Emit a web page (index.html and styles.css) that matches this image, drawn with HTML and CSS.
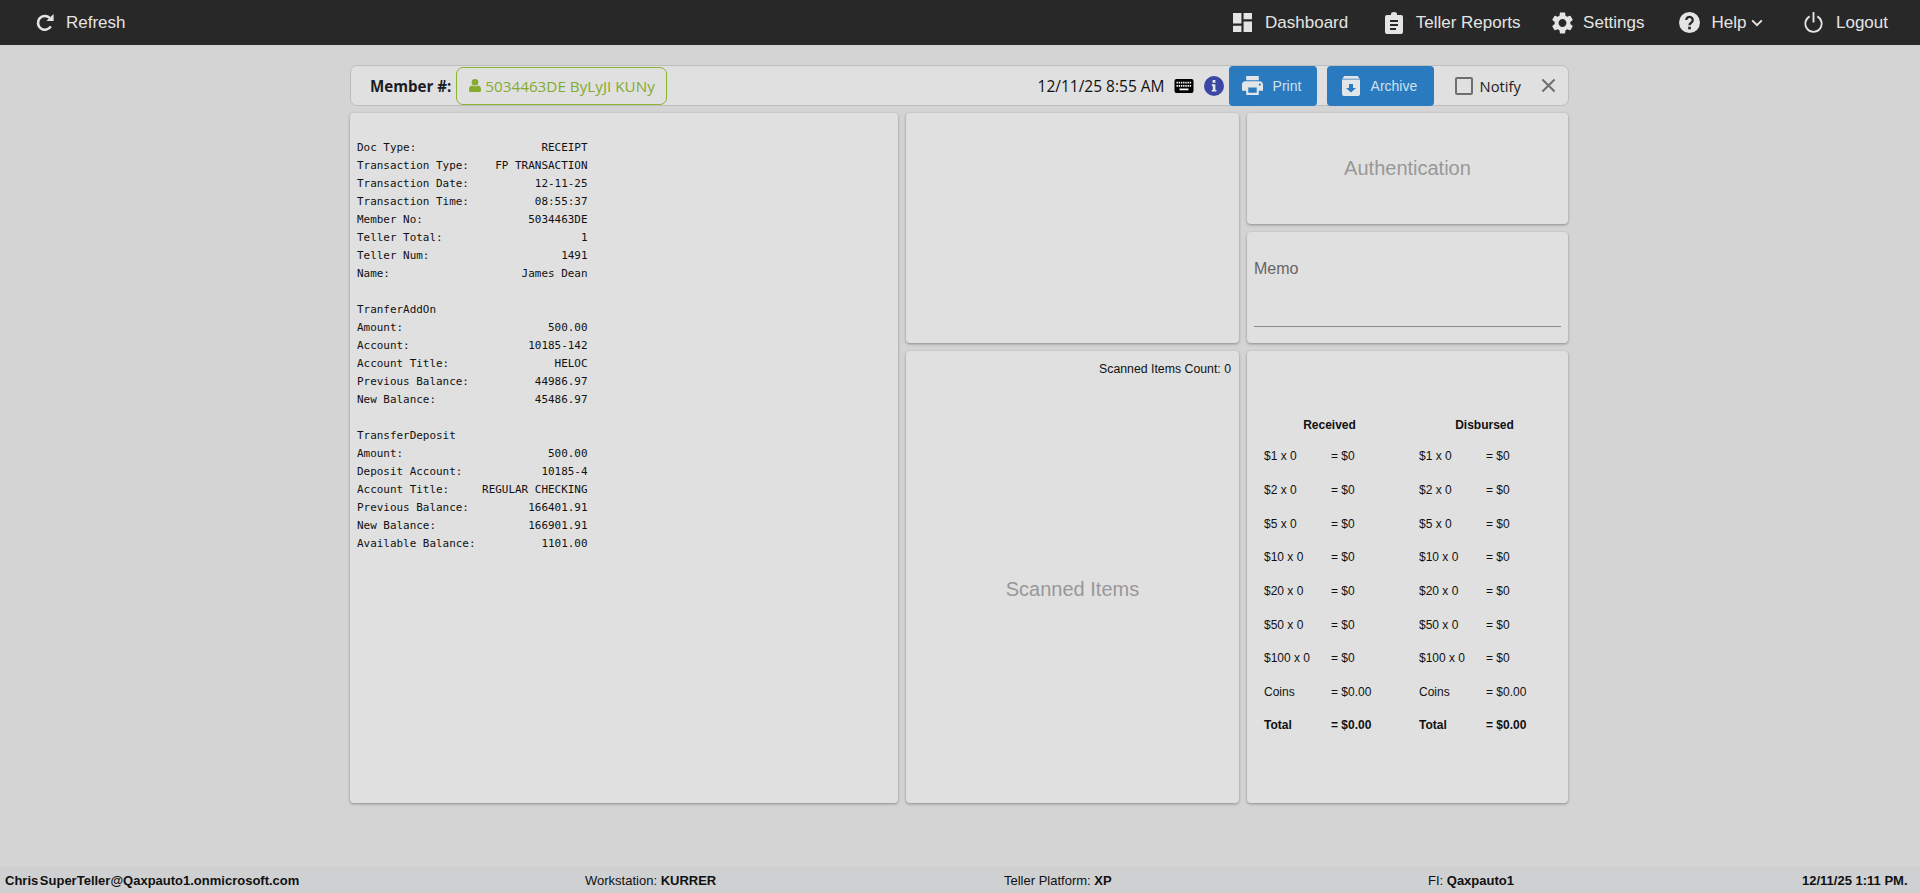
FILE: index.html
```html
<!DOCTYPE html>
<html lang="en">
<head>
<meta charset="utf-8">
<title>Teller</title>
<link rel="stylesheet" href="styles.css">
</head>
<body>
<header class="nav">
  <a class="nav-item refresh"><svg class="ic-refresh" viewBox="0 0 18 18"><path d="M14.8 12.4A6.9 6.9 0 1 1 13.7 3.9" fill="none" stroke="currentColor" stroke-width="2.6"/><path d="M10.4 7H17.6V0Z" fill="currentColor"/></svg>Refresh</a>
  <nav class="nav-right">
    <a class="nav-item"><svg class="ic-dash" viewBox="3 3 18 18"><path fill="currentColor" d="M3 13h8V3H3v10zm0 8h8v-6H3v6zm10 0h8V11h-8v10zm0-18v6h8V3h-8z"/></svg>Dashboard</a>
    <a class="nav-item reports"><svg class="ic-clip" viewBox="0 0 18 22"><path fill="currentColor" fill-rule="evenodd" d="M2 3H6V2.2A3 2.2 0 0 1 12 2.2V3H16A2 2 0 0 1 18 5V20A2 2 0 0 1 16 22H2A2 2 0 0 1 0 20V5A2 2 0 0 1 2 3ZM5 8V10H13V8ZM5 12V14H13V12ZM5 16V18H11V16Z"/></svg>Teller Reports</a>
    <a class="nav-item"><svg class="ic-gear" viewBox="2.4 2 19.2 20"><path fill="currentColor" d="M19.14 12.94c.04-.3.06-.61.06-.94 0-.32-.02-.64-.07-.94l2.03-1.58c.18-.14.23-.41.12-.61l-1.92-3.32c-.12-.22-.37-.29-.59-.22l-2.39.96c-.5-.38-1.03-.7-1.62-.94l-.36-2.54c-.04-.24-.24-.41-.48-.41h-3.84c-.24 0-.43.17-.47.41l-.36 2.54c-.59.24-1.13.57-1.62.94l-2.39-.96c-.22-.08-.47 0-.59.22L2.74 8.87c-.12.21-.08.47.12.61l2.03 1.58c-.05.3-.09.63-.09.94s.02.64.07.94l-2.03 1.58c-.18.14-.23.41-.12.61l1.92 3.32c.12.22.37.29.59.22l2.39-.96c.5.38 1.03.7 1.62.94l.36 2.54c.05.24.24.41.48.41h3.84c.24 0 .44-.17.47-.41l.36-2.54c.59-.24 1.13-.56 1.62-.94l2.39.96c.22.08.47 0 .59-.22l1.92-3.32c.12-.22.07-.47-.12-.61l-2.01-1.58zM12 15.6c-1.98 0-3.6-1.62-3.6-3.6s1.62-3.6 3.6-3.6 3.6 1.62 3.6 3.6-1.62 3.6-3.6 3.6z"/></svg>Settings</a>
    <a class="nav-item help"><svg class="ic-help" viewBox="0 0 22 22"><circle cx="11" cy="11" r="11" fill="currentColor"/><path d="M7.6 8.4A3.4 3.3 0 1 1 12.8 11.2C11.6 12 11 12.4 11 13.8" fill="none" stroke="#282828" stroke-width="2.4"/><rect x="9.6" y="15.4" width="2.8" height="2.8" fill="#282828"/></svg>Help<svg class="ic-chev" viewBox="0 0 12 8"><path d="M1.2 1.4 6 6.2 10.8 1.4" fill="none" stroke="currentColor" stroke-width="2"/></svg></a>
    <a class="nav-item"><svg class="ic-power" viewBox="0 0 20 22"><path d="M6 4.6A8.6 8.6 0 1 0 14 4.6" fill="none" stroke="currentColor" stroke-width="1.9"/><path d="M10 0V11" fill="none" stroke="currentColor" stroke-width="2"/></svg>Logout</a>
  </nav>
</header>

<main class="main">
  <div class="wrap">
    <section class="toolbar">
      <span class="member-label">Member #:</span>
      <span class="member-chip"><svg class="ic-person" viewBox="0 0 12 13"><circle cx="6" cy="3.3" r="3.3" fill="currentColor"/><path fill="currentColor" d="M0 11.5V9.8C0 7.8 1.6 6.4 3.4 6.4 4.2 7 5 7.2 6 7.2S7.8 7 8.6 6.4C10.4 6.4 12 7.8 12 9.8V11.5A1.5 1.5 0 0 1 10.5 13H1.5A1.5 1.5 0 0 1 0 11.5Z"/></svg>5034463DE ByLyJI KUNy</span>
      <span class="spacer"></span>
      <span class="stamp">12/11/25 8:55 AM</span>
      <svg class="ic-kbd" viewBox="0 0 19 14"><rect width="19" height="14" rx="2" fill="#000"/><path fill="none" stroke="#fff" stroke-width="1.8" stroke-dasharray="1.4 .8" d="M2 3.6H17M2 6.8H17"/><path stroke="#fff" stroke-width="1.8" d="M5 10.4H14"/></svg>
      <svg class="ic-info" viewBox="0 0 20 20"><circle cx="10" cy="10" r="10" fill="#3b47a5"/><rect x="8.6" y="4" width="2.8" height="2.8" fill="#e6e6e6"/><path fill="#e6e6e6" d="M7.8 8.3H11.4V14H12.4V15.6H7.8V14H8.8V9.9H7.8Z"/></svg>
      <button class="btn btn-print"><svg class="ic-print" viewBox="2 3 20 18"><path fill="currentColor" d="M19 8H5c-1.66 0-3 1.34-3 3v6h4v4h12v-4h4v-6c0-1.66-1.34-3-3-3zm-3 11H8v-5h8v5zm3-7c-.55 0-1-.45-1-1s.45-1 1-1 1 .45 1 1-.45 1-1 1zm-1-9H6v4h12V3z"/></svg><span class="btn-text">Print</span></button>
      <button class="btn btn-archive"><svg class="ic-archive" viewBox="0 0 18 20"><path fill="currentColor" fill-rule="evenodd" d="M2.2 0H15.8L17.6 2.8H.4ZM0 3.6H18V18A2 2 0 0 1 16 20H2A2 2 0 0 1 0 18ZM7 8V12H4L9 16.5 14 12H11V8Z"/></svg><span class="btn-text">Archive</span></button>
      <label class="notify"><span class="check"></span>Notify</label>
      <svg class="ic-close" viewBox="0 0 16 16"><path d="M1.5 1.5 14.5 14.5M14.5 1.5 1.5 14.5" stroke="#6f6f6f" stroke-width="2.2" fill="none"/></svg>
    </section>

    <div class="board">
      <article class="panel receipt"><pre class="receipt-text">Doc Type:                   RECEIPT
Transaction Type:    FP TRANSACTION
Transaction Date:          12-11-25
Transaction Time:          08:55:37
Member No:                5034463DE
Teller Total:                     1
Teller Num:                    1491
Name:                    James Dean

TranferAddOn
Amount:                      500.00
Account:                  10185-142
Account Title:                HELOC
Previous Balance:          44986.97
New Balance:               45486.97

TransferDeposit
Amount:                      500.00
Deposit Account:            10185-4
Account Title:     REGULAR CHECKING
Previous Balance:         166401.91
New Balance:              166901.91
Available Balance:          1101.00</pre></article>

      <article class="panel blank"></article>

      <article class="panel placeholder auth">Authentication</article>

      <article class="panel memo">
        <span class="memo-label">Memo</span>
        <span class="memo-line"></span>
      </article>

      <article class="panel scanned">
        <div class="scan-count">Scanned Items Count: 0</div>
        <div class="placeholder scan-title">Scanned Items</div>
      </article>

      <article class="panel cash">
        <div class="cash-row head"><b class="span2">Received</b><b class="span2">Disbursed</b></div>
        <div class="cash-row"><span>$1 x 0</span><span>= $0</span><span>$1 x 0</span><span>= $0</span></div>
        <div class="cash-row"><span>$2 x 0</span><span>= $0</span><span>$2 x 0</span><span>= $0</span></div>
        <div class="cash-row"><span>$5 x 0</span><span>= $0</span><span>$5 x 0</span><span>= $0</span></div>
        <div class="cash-row"><span>$10 x 0</span><span>= $0</span><span>$10 x 0</span><span>= $0</span></div>
        <div class="cash-row"><span>$20 x 0</span><span>= $0</span><span>$20 x 0</span><span>= $0</span></div>
        <div class="cash-row"><span>$50 x 0</span><span>= $0</span><span>$50 x 0</span><span>= $0</span></div>
        <div class="cash-row"><span>$100 x 0</span><span>= $0</span><span>$100 x 0</span><span>= $0</span></div>
        <div class="cash-row"><span>Coins</span><span>= $0.00</span><span>Coins</span><span>= $0.00</span></div>
        <div class="cash-row total"><b>Total</b><b>= $0.00</b><b>Total</b><b>= $0.00</b></div>
      </article>
    </div>
  </div>
</main>

<footer class="status">
  <b class="email">Chris SuperTeller@Qaxpauto1.onmicrosoft.com</b>
  <span>Workstation: <b>KURRER</b></span>
  <span>Teller Platform: <b>XP</b></span>
  <span>FI: <b>Qaxpauto1</b></span>
  <b>12/11/25 1:11 PM.</b>
</footer>
</body>
</html>
```
FILE: styles.css
```css
* { box-sizing: border-box; }
html, body { margin: 0; height: 100%; }
body {
  display: flex;
  flex-direction: column;
  height: 893px;
  overflow: hidden;
  background: #d4d4d4;
  color: #000;
  font-family: "Liberation Sans", Arial, sans-serif;
}

/* top navigation */
.nav {
  flex: 0 0 45px;
  display: flex;
  align-items: center;
  justify-content: space-between;
  padding: 0 32px 0 36px;
  background: #282828;
  color: #e4e4e4;
  font-size: 17px;
}
.nav-right { display: flex; align-items: center; gap: 34px; }
.nav-item { display: flex; align-items: center; gap: 13px; }
.reports { margin: 0 -2.5px 0 2.5px; }
.help { margin-right: 7px; }
.refresh svg { margin-right: -1px; }
.ic-refresh { width: 18px; height: 18px; }
.ic-dash { width: 19px; height: 19px; }
.ic-clip { width: 18px; height: 22px; }
.ic-gear { width: 21px; height: 22px; margin-right: -3px; }
.ic-help { width: 21px; height: 21px; margin-right: -1px; }
.ic-chev { width: 12px; height: 8px; margin-left: -8.5px; }
.ic-power { width: 19px; height: 21px; }

/* main */
.main { flex: 1; padding-top: 20px; }
.wrap { width: 1218px; margin-left: 350px; }

.toolbar {
  height: 41px;
  margin: 0 -1px 7px 0;
  display: flex;
  align-items: center;
  background: #e0e0e0;
  border: 1px solid #bdbdbd;
  border-radius: 7px;
}
.member-label {
  margin-left: 19px;
  font: 700 15.1px "Open Sans", sans-serif;
  color: #1c1c24;
}
.member-chip {
  height: 38px;
  width: 211px;
  margin-left: 5px;
  display: flex;
  align-items: center;
  gap: 4px;
  padding-left: 12px;
  border: 1px solid #8ab431;
  border-radius: 7px;
  color: #85ab2f;
  font: 400 15.25px "Open Sans", sans-serif;
}
.ic-person { width: 12px; height: 13px; }
.spacer { flex: 1; }
.stamp { font: 400 15.5px "Open Sans", sans-serif; color: #111; }
.ic-kbd { width: 20px; height: 14px; margin-left: 9px; }
.ic-info { width: 20px; height: 20px; margin-left: 10px; }
.btn {
  height: 40px;
  margin: 0;
  display: flex;
  align-items: center;
  border: 0;
  border-radius: 4px;
  background: #2a7abf;
  color: #e3e6e8;
  font: 400 14px "Liberation Sans", Arial, sans-serif;
}
.btn-print { width: 88px; margin-left: 5px; padding-left: 13px; gap: 10px; }
.btn-archive { width: 107px; margin-left: 10px; padding-left: 15px; gap: 11px; }
.ic-print { width: 21px; height: 19px; }
.ic-archive { width: 18px; height: 20px; }
.btn-text { color: #cfe0ee; }
.notify {
  display: flex;
  align-items: center;
  gap: 7px;
  margin-left: 21px;
  font: 400 14.8px "Open Sans", sans-serif;
  color: #1b1b1b;
}
.check {
  width: 18px;
  height: 18px;
  border: 2px solid #6e6e6e;
  border-radius: 2px;
}
.ic-close { width: 15px; height: 15px; margin-left: 20px; margin-right: 12px; }

/* board */
.board {
  display: grid;
  grid-template-columns: 548px 333px 321px;
  grid-template-rows: 111px 111px 452px;
  column-gap: 8px;
  row-gap: 8px;
}
.panel {
  background: #e0e0e0;
  border-radius: 4px;
  box-shadow: 0 1px 3px rgba(0, 0, 0, .35);
}
.receipt { grid-row: 1 / 4; padding: 26px 0 0 7px; }
.receipt-text {
  margin: 0;
  font: 400 10.95px/18px "DejaVu Sans Mono", monospace;
  color: #111;
}
.blank { grid-row: 1 / 3; }
.placeholder { color: #989898; font-size: 20px; }
.auth { display: flex; align-items: center; justify-content: center; }

.memo {
  display: flex;
  flex-direction: column;
  justify-content: space-between;
  padding: 28px 7px 16px 7px;
}
.memo-label { font-size: 16px; color: #666; }
.memo-line { height: 1px; background: #8a8a8a; }

.scanned { display: flex; flex-direction: column; padding: 11px 8px 0; }
.scan-count { font-size: 12.3px; text-align: right; color: #111; }
.scan-title { flex: 1; display: flex; align-items: center; justify-content: center; }

.cash { padding: 59px 0 0 17px; font-size: 12px; color: #111; }
.cash-row {
  display: grid;
  grid-template-columns: 67px 88px 67px 88px;
  height: 33.7px;
  align-items: center;
}
.cash-row.head { height: 29.4px; }
.cash-row.total { height: 31.4px; }
.span2 { grid-column: span 2; padding-right: 24px; text-align: center; }

/* footer */
.status {
  flex: 0 0 26px;
  display: grid;
  grid-template-columns: 580px 419px 424px 374px 1fr;
  align-items: center;
  padding-left: 5px;
  background: #cfd0d2;
  font-size: 13px;
  color: #111;
}
.email { word-spacing: -2px; }
```
